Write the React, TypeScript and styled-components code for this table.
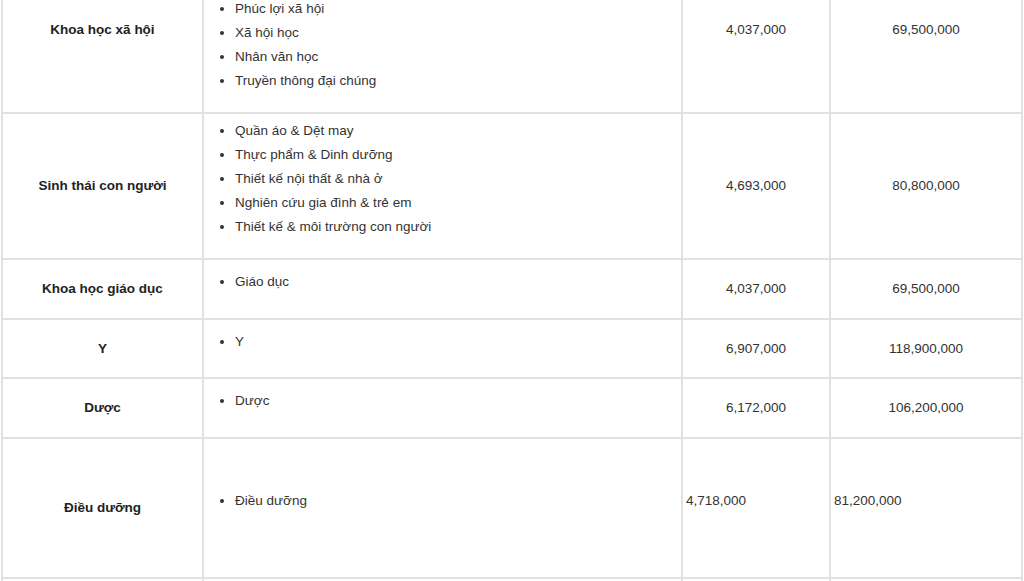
import React from "react";
import styled, { createGlobalStyle } from "styled-components";

const GlobalStyle = createGlobalStyle`
  html, body {
    margin: 0;
    padding: 0;
    background: #ffffff;
    overflow: hidden;
  }
  body {
    font-family: "Liberation Sans", Arial, sans-serif;
    font-size: 13.5px;
    color: #333333;
  }
`;

const BORDER = "#e1e1e1";

const Table = styled.div`
  margin: -55px 0 0 1px;
  width: 1022px;
  box-sizing: border-box;
  border-left: 2px solid ${BORDER};
  border-top: 2px solid ${BORDER};
`;

const Row = styled.div<{ $height?: number }>`
  display: grid;
  grid-template-columns: 201px 479px 148px 192px;
  min-height: ${(p) => (p.$height ? `${p.$height}px` : "0")};
`;

const Cell = styled.div`
  box-sizing: border-box;
  border-right: 2px solid ${BORDER};
  border-bottom: 2px solid ${BORDER};
  padding: 5px 3px;
  display: flex;
  flex-direction: column;
  justify-content: center;
  line-height: 24px;
`;

const HeadCell = styled(Cell)`
  align-items: center;
  text-align: center;
  font-weight: bold;
  color: #222222;
`;

const AmountCell = styled(Cell)<{ $align?: "center" | "left" }>`
  text-align: ${(p) => p.$align ?? "center"};
`;

const Para = styled.p`
  margin: 0 0 14px;
`;

const List = styled.ul<{ $lead?: number }>`
  margin: ${(p) => p.$lead ?? 0}px 0 14px;
  padding-left: 28px;
  list-style: disc;
`;

const Item = styled.li`
  line-height: 24px;
`;

type Faculty = {
  name: string;
  majors: string[];
  fee: string;
  total: string;
  height?: number;
  lead?: number;
  left?: boolean;
};

const rows: Faculty[] = [
  {
    name: "Khoa học xã hội",
    majors: ["Phúc lợi xã hội", "Xã hội học", "Nhân văn học", "Truyền thông đại chúng"],
    fee: "4,037,000",
    total: "69,500,000",
    lead: 45,
  },
  {
    name: "Sinh thái con người",
    majors: [
      "Quần áo & Dệt may",
      "Thực phẩm & Dinh dưỡng",
      "Thiết kế nội thất & nhà ở",
      "Nghiên cứu gia đình & trẻ em",
      "Thiết kế & môi trường con người",
    ],
    fee: "4,693,000",
    total: "80,800,000",
  },
  { name: "Khoa học giáo dục", majors: ["Giáo dục"], fee: "4,037,000", total: "69,500,000", height: 60 },
  { name: "Y", majors: ["Y"], fee: "6,907,000", total: "118,900,000", height: 59 },
  { name: "Dược", majors: ["Dược"], fee: "6,172,000", total: "106,200,000", height: 60 },
  { name: "Điều dưỡng", majors: ["Điều dưỡng"], fee: "4,718,000", total: "81,200,000", height: 140, left: true },
];

export default function App() {
  return (
    <>
      <GlobalStyle />
      <Table>
        {rows.map((r) => (
          <Row key={r.name} $height={r.height}>
            <HeadCell>{r.name}</HeadCell>
            <Cell>
              <List $lead={r.lead}>
                {r.majors.map((m) => (
                  <Item key={m}>{m}</Item>
                ))}
              </List>
            </Cell>
            {r.left ? (
              <>
                <AmountCell $align="left">
                  <Para>{r.fee}</Para>
                </AmountCell>
                <AmountCell $align="left">
                  <Para>{r.total}</Para>
                </AmountCell>
              </>
            ) : (
              <>
                <AmountCell>{r.fee}</AmountCell>
                <AmountCell>{r.total}</AmountCell>
              </>
            )}
          </Row>
        ))}
        <Row $height={60}>
          <HeadCell />
          <Cell />
          <AmountCell />
          <AmountCell />
        </Row>
      </Table>
    </>
  );
}
